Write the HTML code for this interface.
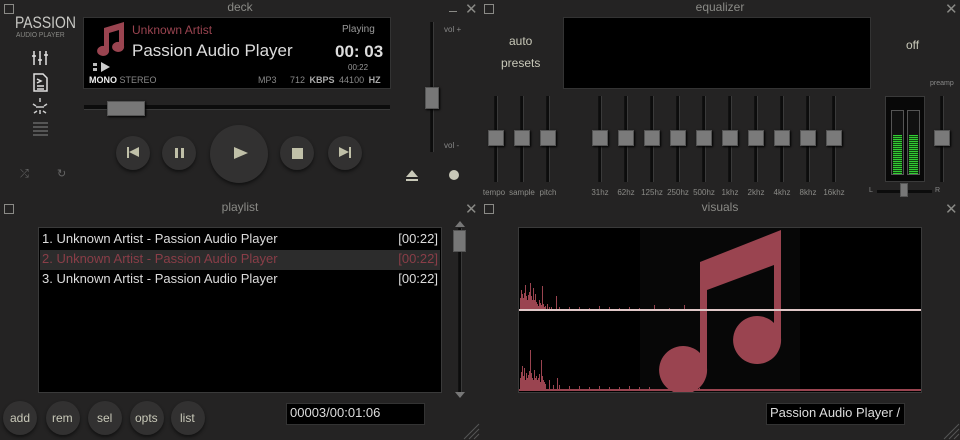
<!DOCTYPE html>
<html><head><style>
*{margin:0;padding:0;box-sizing:border-box}
body{width:960px;height:440px;background:#242323;position:relative;overflow:hidden;font-family:"Liberation Sans","DejaVu Sans",sans-serif;color:#c8c8b8}
.a{position:absolute}
.ttl{position:absolute;font-size:12px;color:#8a8a86;text-align:center;width:480px}
.sq{position:absolute;width:10px;height:10px;border:1px solid #8a8a86}
.x{position:absolute;font-size:15px;color:#8a8a86;line-height:12px}
.box{position:absolute;background:#000;border:1px solid #3a3a3a}
.rb{position:absolute;border-radius:50%;background:#323131;box-shadow:0 2px 3px #111}
.trk{position:absolute;width:4px;background:#0c0c0c;border-left:1px solid #111;border-right:1px solid #3a3a3a}
.th{position:absolute;width:16px;height:16px;background:#7a7a7a;border:1px solid #555;box-shadow:1px 1px 2px #000}
.lbl{position:absolute;font-size:8px;color:#8a8a86;width:40px;text-align:center}
</style></head><body>
<!-- deck -->
<div class="sq" style="left:4px;top:4px"></div>
<div class="ttl" style="left:0;top:0">deck</div>
<div class="a" style="left:449px;top:11px;width:8px;height:1px;background:#8a8a86"></div>
<div class="x" style="left:465px;top:4px">✕</div>
<div class="a" style="left:15px;top:13px;font-size:17px;color:#c8c8c4;transform:scaleX(0.82);transform-origin:0 0">PASSION</div>
<div class="a" style="left:16px;top:32px;font-size:7px;color:#8a8a86;transform:scaleX(0.95);transform-origin:0 0">AUDIO PLAYER</div>
<svg class="a" style="left:30px;top:48px" width="22" height="90" viewBox="0 0 22 90" fill="none" stroke="#e0e0e0" stroke-width="1.5">
<path d="M4 3v14M10 3v14M16 3v14M2 8h4M8 12h4M14 7h4"/>
<path d="M4 26h9l4 4v13H4z M7 31l4 2-4 2 M7 38h7M7 41h7"/>
<path d="M10 50v4M10 62v4M3 56l3 2M17 56l-3 2M4 65l3-2M16 65l-3-2M6 59h8" stroke="#ccc"/>
<path d="M3 75h15M3 79h15M3 83h15M3 87h15" stroke="#555" stroke-width="2"/>
</svg>
<div class="a" style="left:20px;top:168px;font-size:11px;color:#666">⤮</div>
<div class="a" style="left:57px;top:167px;font-size:11px;color:#666">↻</div>
<div class="box" style="left:83px;top:17px;width:308px;height:72px;border-color:#333"></div>
<svg class="a" style="left:92px;top:22px" width="34" height="34" viewBox="0 0 34 34"><path fill="#9a4450" d="M12 6 L32 0 V24 A6 5 0 1 1 27 20 V8 L17 11 V28 A6 5 0 1 1 12 24Z"/></svg>
<div class="a" style="left:93px;top:63px;width:4px;height:3px;background:#bbb"></div>
<div class="a" style="left:93px;top:68px;width:4px;height:3px;background:#bbb"></div>
<div class="a" style="left:101px;top:62px;width:0;height:0;border-left:9px solid #ccc;border-top:5px solid transparent;border-bottom:5px solid transparent"></div>
<div class="a" style="left:132px;top:23px;font-size:12px;color:#9a4450">Unknown Artist</div>
<div class="a" style="left:132px;top:41px;font-size:17px;color:#ddd">Passion Audio Player</div>
<div class="a" style="left:342px;top:24px;font-size:10px;color:#999">Playing</div>
<div class="a" style="left:335px;top:42px;font-size:17px;color:#ddd;font-weight:bold">00: 03</div>
<div class="a" style="left:348px;top:63px;font-size:8px;color:#999">00:22</div>
<div class="a" style="left:89px;top:75px;font-size:9px;color:#eee;font-weight:bold">MONO <span style="color:#888;font-weight:normal">STEREO</span></div>
<div class="a" style="left:258px;top:75px;font-size:9px;color:#888;word-spacing:2px">MP3 &nbsp; 712 <b style="color:#aaa">KBPS</b> 44100 <b style="color:#aaa">HZ</b></div>
<div class="a" style="left:84px;top:105px;width:306px;height:5px;background:#0c0c0c;border-bottom:1px solid #3a3a3a"></div>
<div class="a" style="left:107px;top:101px;width:38px;height:15px;background:#777;border:1px solid #555;box-shadow:1px 1px 2px #000"></div>
<div class="rb" style="left:116px;top:136px;width:34px;height:34px"></div>
<div class="rb" style="left:162px;top:136px;width:34px;height:34px"></div>
<div class="rb" style="left:210px;top:125px;width:58px;height:58px"></div>
<div class="rb" style="left:280px;top:136px;width:34px;height:34px"></div>
<div class="rb" style="left:328px;top:136px;width:34px;height:34px"></div>
<div class="a" style="left:127px;top:147px;width:2px;height:11px;background:#c0c0a8"></div>
<div class="a" style="left:129px;top:147px;border-right:10px solid #c0c0a8;border-top:5.5px solid transparent;border-bottom:5.5px solid transparent"></div>
<div class="a" style="left:175px;top:148px;width:3px;height:10px;background:#c0c0a8"></div>
<div class="a" style="left:181px;top:148px;width:3px;height:10px;background:#c0c0a8"></div>
<div class="a" style="left:234px;top:147px;border-left:14px solid #c0c0a8;border-top:6px solid transparent;border-bottom:6px solid transparent"></div>
<div class="a" style="left:292px;top:148px;width:11px;height:11px;background:#c0c0a8"></div>
<div class="a" style="left:339px;top:147px;border-left:10px solid #c0c0a8;border-top:5.5px solid transparent;border-bottom:5.5px solid transparent"></div>
<div class="a" style="left:349px;top:147px;width:2px;height:11px;background:#c0c0a8"></div>
<div class="trk" style="left:430px;top:22px;height:130px"></div>
<div class="a" style="left:425px;top:87px;width:14px;height:22px;background:#777;border:1px solid #555;box-shadow:1px 1px 2px #000"></div>
<div class="a" style="left:444px;top:25px;font-size:8px;color:#888">vol +</div>
<div class="a" style="left:444px;top:141px;font-size:8px;color:#888">vol -</div>
<div class="a" style="left:406px;top:170px;border-bottom:7px solid #c8c8b8;border-left:6px solid transparent;border-right:6px solid transparent"></div>
<div class="a" style="left:406px;top:179px;width:12px;height:2px;background:#c8c8b8"></div>
<div class="a" style="left:449px;top:170px;width:10px;height:10px;border-radius:50%;background:#c8c8b8"></div>
<!-- equalizer -->
<div class="sq" style="left:484px;top:4px"></div>
<div class="ttl" style="left:480px;top:0">equalizer</div>
<div class="x" style="left:945px;top:4px">✕</div>
<div class="box" style="left:563px;top:17px;width:308px;height:72px;border-color:#333"></div>
<div class="a" style="left:509px;top:34px;font-size:12px">auto</div>
<div class="a" style="left:501px;top:56px;font-size:12px">presets</div>
<div class="a" style="left:906px;top:38px;font-size:12px">off</div>
<div class="a" style="left:930px;top:80px;font-size:7px;color:#888">preamp</div>
<div class="trk" style="left:494px;top:96px;height:86px"></div><div class="th" style="left:488px;top:130px"></div><div class="lbl" style="left:474px;top:188px">tempo</div>
<div class="trk" style="left:520px;top:96px;height:86px"></div><div class="th" style="left:514px;top:130px"></div><div class="lbl" style="left:502px;top:188px">sample</div>
<div class="trk" style="left:546px;top:96px;height:86px"></div><div class="th" style="left:540px;top:130px"></div><div class="lbl" style="left:528px;top:188px">pitch</div>
<div class="trk" style="left:598px;top:96px;height:86px"></div><div class="th" style="left:592px;top:130px"></div><div class="lbl" style="left:580px;top:188px">31hz</div>
<div class="trk" style="left:624px;top:96px;height:86px"></div><div class="th" style="left:618px;top:130px"></div><div class="lbl" style="left:606px;top:188px">62hz</div>
<div class="trk" style="left:650px;top:96px;height:86px"></div><div class="th" style="left:644px;top:130px"></div><div class="lbl" style="left:632px;top:188px">125hz</div>
<div class="trk" style="left:676px;top:96px;height:86px"></div><div class="th" style="left:670px;top:130px"></div><div class="lbl" style="left:658px;top:188px">250hz</div>
<div class="trk" style="left:702px;top:96px;height:86px"></div><div class="th" style="left:696px;top:130px"></div><div class="lbl" style="left:684px;top:188px">500hz</div>
<div class="trk" style="left:728px;top:96px;height:86px"></div><div class="th" style="left:722px;top:130px"></div><div class="lbl" style="left:710px;top:188px">1khz</div>
<div class="trk" style="left:754px;top:96px;height:86px"></div><div class="th" style="left:748px;top:130px"></div><div class="lbl" style="left:736px;top:188px">2khz</div>
<div class="trk" style="left:780px;top:96px;height:86px"></div><div class="th" style="left:774px;top:130px"></div><div class="lbl" style="left:762px;top:188px">4khz</div>
<div class="trk" style="left:806px;top:96px;height:86px"></div><div class="th" style="left:800px;top:130px"></div><div class="lbl" style="left:788px;top:188px">8khz</div>
<div class="trk" style="left:832px;top:96px;height:86px"></div><div class="th" style="left:826px;top:130px"></div><div class="lbl" style="left:814px;top:188px">16khz</div>
<div class="trk" style="left:940px;top:96px;height:86px"></div><div class="th" style="left:934px;top:130px"></div>
<div class="box" style="left:885px;top:96px;width:40px;height:86px;background:#080808"></div>
<div class="a" style="left:891px;top:110px;width:13px;height:65px;border:1px solid #555;background:#111"></div>
<div class="a" style="left:907px;top:110px;width:13px;height:65px;border:1px solid #555;background:#111"></div>
<div class="a" style="left:893px;top:135px;width:9px;height:39px;background:repeating-linear-gradient(#3c3 0 1px,#141 1px 2px)"></div>
<div class="a" style="left:909px;top:135px;width:9px;height:39px;background:repeating-linear-gradient(#3c3 0 1px,#141 1px 2px)"></div>
<div class="a" style="left:869px;top:187px;font-size:7px;color:#888">L</div>
<div class="a" style="left:935px;top:187px;font-size:7px;color:#888">R</div>
<div class="a" style="left:877px;top:190px;width:55px;height:3px;background:#0c0c0c"></div>
<div class="a" style="left:900px;top:183px;width:8px;height:14px;background:#777;border:1px solid #555"></div>
<!-- playlist -->
<div class="sq" style="left:4px;top:204px"></div>
<div class="ttl" style="left:0;top:200px">playlist</div>
<div class="x" style="left:465px;top:204px">✕</div>
<div class="box" style="left:38px;top:227px;width:404px;height:166px"></div>
<div class="a" style="left:40px;top:250px;width:400px;height:20px;background:#2c2c2c"></div>
<div class="a" style="left:42px;top:229px;font-size:13px;line-height:20px;color:#ddd;width:396px">
<div>1. Unknown Artist - Passion Audio Player<span style="float:right">[00:22]</span></div>
<div style="color:#8a3e48">2. Unknown Artist - Passion Audio Player<span style="float:right">[00:22]</span></div>
<div>3. Unknown Artist - Passion Audio Player<span style="float:right">[00:22]</span></div></div>
<div class="a" style="left:455px;top:221px;border-bottom:6px solid #777;border-left:5px solid transparent;border-right:5px solid transparent"></div>
<div class="a" style="left:455px;top:392px;border-top:6px solid #777;border-left:5px solid transparent;border-right:5px solid transparent"></div>
<div class="trk" style="left:458px;top:228px;height:164px"></div>
<div class="a" style="left:453px;top:230px;width:13px;height:22px;background:#777;border:1px solid #555"></div>
<div class="rb" style="left:3px;top:401px;width:34px;height:34px"></div>
<div class="rb" style="left:46px;top:401px;width:34px;height:34px"></div>
<div class="rb" style="left:88px;top:401px;width:34px;height:34px"></div>
<div class="rb" style="left:130px;top:401px;width:34px;height:34px"></div>
<div class="rb" style="left:171px;top:401px;width:34px;height:34px"></div>
<div class="a" style="left:10px;top:411px;font-size:12px;color:#c8c8b8">add</div>
<div class="a" style="left:52px;top:411px;font-size:12px;color:#c8c8b8">rem</div>
<div class="a" style="left:97px;top:411px;font-size:12px;color:#c8c8b8">sel</div>
<div class="a" style="left:135px;top:411px;font-size:12px;color:#c8c8b8">opts</div>
<div class="a" style="left:180px;top:411px;font-size:12px;color:#c8c8b8">list</div>
<div class="box" style="left:286px;top:403px;width:139px;height:22px;border-color:#333;font-size:13px;color:#ddd;padding:1px 3px">00003/00:01:06</div>
<!-- visuals -->
<div class="sq" style="left:484px;top:204px"></div>
<div class="ttl" style="left:480px;top:200px">visuals</div>
<div class="x" style="left:945px;top:204px">✕</div>
<div class="box" style="left:518px;top:227px;width:404px;height:166px"></div>
<div class="a" style="left:640px;top:228px;width:160px;height:164px;background:#070707"></div>
<svg class="a" style="left:519px;top:228px" width="402" height="164" viewBox="0 0 402 164">
<path fill="#9a4450" d="M181 34 L262 2 V110 A24 24 0 1 1 255 95 V37 L188 62 V140 A24 24 0 1 1 181 125Z"/>
<g stroke="#9a4450" stroke-width="1" fill="none">
<path d="M1.5 82V70M2.5 82V62M3.5 82V66M4.5 82V70M5.5 82V65M6.5 82V57M7.5 82V68M8.5 82V72M9.5 82V67M10.5 82V64M11.5 82V55M12.5 82V68M13.5 82V72M14.5 82V60M15.5 82V72M16.5 82V66M17.5 82V74M18.5 82V76M19.5 82V78M20.5 82V72M21.5 82V75M22.5 82V77M23.5 82V58M24.5 82V76M25.5 82V79M26.5 82V78M28.5 82V76M30.5 82V79M32.5 82V79M37.5 82V68M40.5 82V79M50.5 82V79M60.5 82V79M70.5 82V80M80.5 82V78M90.5 82V79M100.5 82V80M110.5 82V79M120.5 82V80M135.5 82V77M150.5 82V80M165.5 82V77"/>
<path d="M1.5 162V150M2.5 162V144M3.5 162V138M4.5 162V148M5.5 162V140M6.5 162V152M7.5 162V145M8.5 162V150M9.5 162V147M10.5 162V143M11.5 162V122M12.5 162V145M13.5 162V150M14.5 162V152M15.5 162V142M16.5 162V150M17.5 162V148M18.5 162V152M19.5 162V150M20.5 162V146M21.5 162V154M22.5 162V132M23.5 162V148M24.5 162V152M25.5 162V154M26.5 162V156M30.5 162V152M34.5 162V157M38.5 162V150M40.5 162V157M50.5 162V158M60.5 162V158M70.5 162V159M80.5 162V158M90.5 162V159M100.5 162V159M110.5 162V158M120.5 162V159M130.5 162V159M150.5 162V159M165.5 162V159M180.5 162V160"/>
</g>
<rect x="0" y="161" width="402" height="2" fill="#9a4450"/>
<rect x="0" y="81" width="402" height="2" fill="#e0c8c8"/>
</svg>
<div class="box" style="left:766px;top:403px;width:139px;height:22px;border-color:#333;font-size:13px;color:#ddd;padding:1px 3px;white-space:nowrap;overflow:hidden">Passion Audio Player /</div>
<svg class="a" style="left:940px;top:420px" width="20" height="20"><path d="M4 19L19 4M9 19L19 9M14 19L19 14" stroke="#555"/></svg>
<svg class="a" style="left:460px;top:420px" width="20" height="20"><path d="M4 19L19 4M9 19L19 9M14 19L19 14" stroke="#555"/></svg>
</body></html>
